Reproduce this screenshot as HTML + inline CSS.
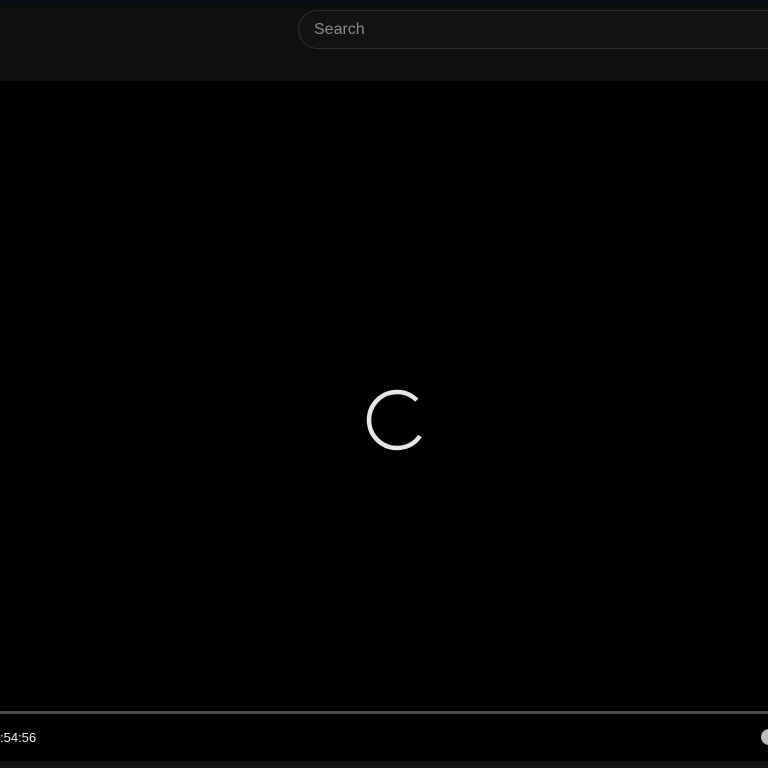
<!DOCTYPE html>
<html><head><style>
html,body{margin:0;padding:0;width:768px;height:768px;overflow:hidden;background:#000;font-family:"Liberation Sans",sans-serif}
.top{position:absolute;left:0;top:0;width:768px;height:81px;background:#0f0f0f}
.grad{position:absolute;left:0;top:0;width:768px;height:8px;background:linear-gradient(#070c1a,#0f0f0f)}
.search{position:absolute;left:298px;top:10px;width:500px;height:39px;border:1px solid #303030;border-radius:20px;background:#121212;box-sizing:border-box}
.search span{position:absolute;left:15px;top:10px;font-size:16px;color:#8a8a8a}
.bar{position:absolute;left:0;top:711px;width:768px;height:3px;background:#4a4a4a}
.time{position:absolute;left:0;top:730px;font-size:13px;color:#eee}
.btm{position:absolute;left:0;top:761px;width:768px;height:7px;background:#111}
.ico{position:absolute;left:761px;top:729px;width:16px;height:16px;border-radius:50%;background:#bbb}
</style></head><body>
<div class="top"><div class="grad"></div><div class="search"><span>Search</span></div></div>
<svg style="position:absolute;left:0;top:0" width="768" height="768">
<path d="M416.8 400.2 A28 28 0 1 0 420 436" fill="none" stroke="#e6e6e6" stroke-width="4.5"/>
</svg>
<div class="bar"></div>
<div class="time">:54:56</div>
<div class="ico"></div>
<div class="btm"></div>
</body></html>
